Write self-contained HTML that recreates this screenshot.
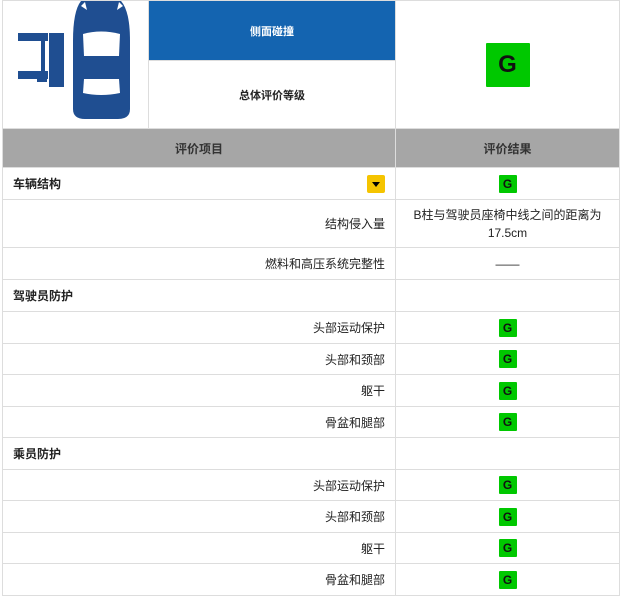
<!DOCTYPE html><html><head><meta charset="utf-8"><style>
body{margin:0;width:620px;height:598px;overflow:hidden;background:#fff;font-family:"Liberation Sans","Noto Sans CJK SC",sans-serif;font-size:12px;color:#222}
table{border-collapse:collapse;position:absolute;left:2px;top:0;width:617px;table-layout:fixed}
td{border:1px solid #ddd;padding:0 10px}
.g{display:inline-block;width:18px;height:18px;background:#00c800;color:#111;font-weight:bold;font-size:12px;line-height:18px;text-align:center;border-radius:1px}
.r{text-align:right}.c{text-align:center}.b{font-weight:bold}
</style></head><body>
<table>
<col style="width:146px"><col style="width:247px"><col style="width:224px">
<tr style="height:60px"><td rowspan="2" style="padding:0;position:relative">
<svg width="146" height="127" viewBox="0 0 146 127" style="display:block">
<g fill="#1f4e91"><rect x="15" y="32" width="30" height="8"/><rect x="15" y="70" width="30" height="8"/><rect x="38" y="35" width="4" height="45"/><rect x="34" y="35" width="10" height="3"/><rect x="34" y="78" width="10" height="3"/><rect x="46" y="32" width="15" height="54"/>
<path d="M78 0 H118 Q127 10 127 40 V108 Q127 118 115 118 H82 Q70 118 70 108 V40 Q70 10 78 0Z"/></g>
<g fill="#fff"><path d="M80 33 Q98 28 117 33 L116 55 H81Z"/><path d="M81 78 H116 L117 92 Q98 96 80 92Z"/><path d="M78 5 l4 -4 l2 8z"/><path d="M120 5 l-4 -4 l-2 8z"/></g>
</svg></td>
<td class="c b" style="background:#1464b0;color:#fff;font-size:11px">侧面碰撞</td>
<td rowspan="2" class="c"><span class="g" style="width:44px;height:44px;line-height:44px;font-size:24px">G</span></td></tr>
<tr style="height:67px"><td class="c b" style="font-size:11px">总体评价等级</td></tr>
<tr style="height:39px;background:#a6a6a6"><td colspan="2" class="c b" style="color:#333">评价项目</td><td class="c b" style="color:#333">评价结果</td></tr>
<tr style="height:32px"><td colspan="2" class="b" style="position:relative">车辆结构<span style="position:absolute;right:10px;top:7px;width:18px;height:18px;background:#f5c400;border-radius:2px"><span style="position:absolute;left:5px;top:7px;border-left:4px solid transparent;border-right:4px solid transparent;border-top:5px solid #000"></span></span></td><td class="c"><span class="g">G</span></td></tr>
<tr style="height:48px"><td colspan="2" class="r">结构侵入量</td><td class="c" style="line-height:18px">B柱与驾驶员座椅中线之间的距离为17.5cm</td></tr>
<tr style="height:32px"><td colspan="2" class="r">燃料和高压系统完整性</td><td class="c">——</td></tr>
<tr style="height:32px"><td colspan="2" class="b">驾驶员防护</td><td></td></tr>
<tr style="height:32px"><td colspan="2" class="r">头部运动保护</td><td class="c"><span class="g">G</span></td></tr>
<tr style="height:31px"><td colspan="2" class="r">头部和颈部</td><td class="c"><span class="g">G</span></td></tr>
<tr style="height:32px"><td colspan="2" class="r">躯干</td><td class="c"><span class="g">G</span></td></tr>
<tr style="height:31px"><td colspan="2" class="r">骨盆和腿部</td><td class="c"><span class="g">G</span></td></tr>
<tr style="height:32px"><td colspan="2" class="b">乘员防护</td><td></td></tr>
<tr style="height:31px"><td colspan="2" class="r">头部运动保护</td><td class="c"><span class="g">G</span></td></tr>
<tr style="height:32px"><td colspan="2" class="r">头部和颈部</td><td class="c"><span class="g">G</span></td></tr>
<tr style="height:31px"><td colspan="2" class="r">躯干</td><td class="c"><span class="g">G</span></td></tr>
<tr style="height:32px"><td colspan="2" class="r">骨盆和腿部</td><td class="c"><span class="g">G</span></td></tr>
</table></body></html>
